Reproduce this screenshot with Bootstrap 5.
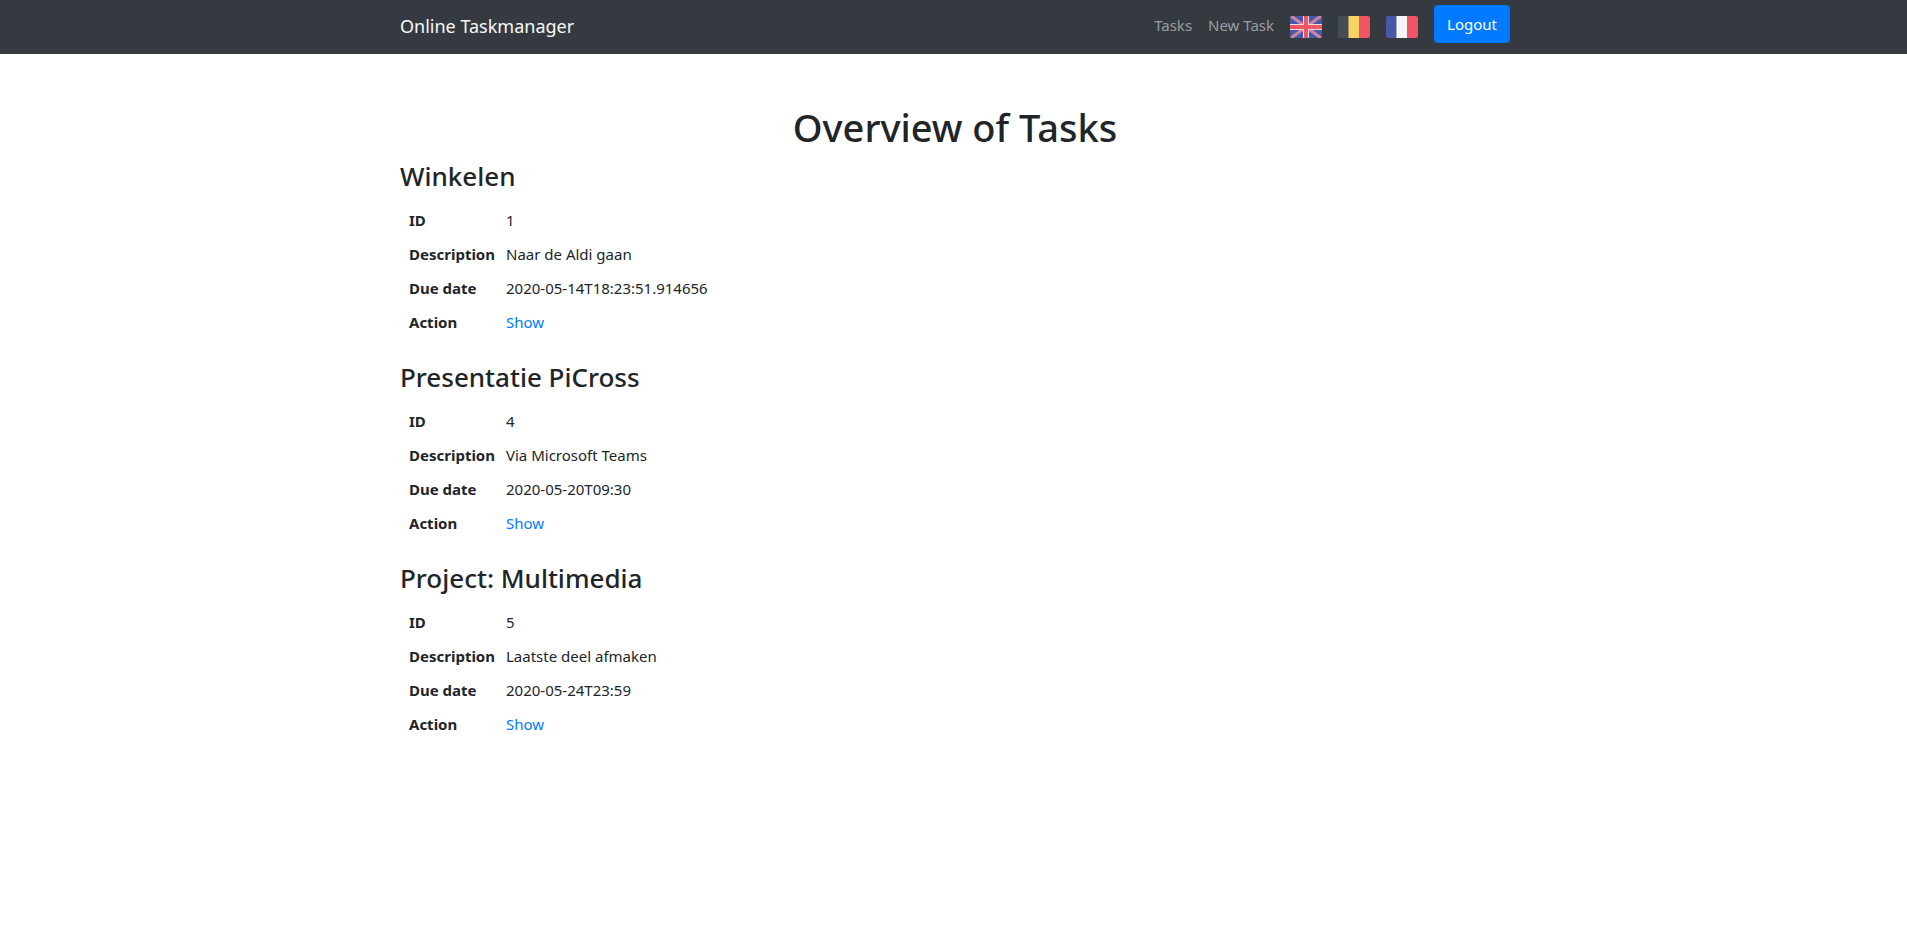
<!DOCTYPE html>
<html lang="en">
<head>
<meta charset="utf-8">
<meta name="viewport" content="width=device-width, initial-scale=1">
<title>Online Taskmanager</title>
<link href="https://cdn.jsdelivr.net/npm/bootstrap@5.3.0/dist/css/bootstrap.min.css" rel="stylesheet">
<style>
  body { font-family: "Segoe UI", "Noto Sans", "Open Sans", sans-serif; font-size: 15px; line-height: 24px; color: #212529; }
  .page-band { padding: 0 0 0 3px; }
  .page-band > .container { max-width: 1140px; padding: 0 15px; }
  .top-bar { background: #343a40; min-height: 54px; }
  .top-bar .navbar-brand { font-size: 18px; line-height: 30px; padding: 0 0 2px; }
  .top-bar .navbar-nav .nav-link { padding: 0 0 4px; color: rgba(255, 255, 255, .5); }
  .top-bar .navbar-nav .nav-link:hover { color: rgba(255, 255, 255, .75); }
  .top-bar .navbar-nav .flag-link { padding: 0 0 1px; }
  .flag { display: block; width: 32px; height: 22px; }
  .btn-logout { --bs-btn-bg: #007bff; --bs-btn-border-color: #007bff; --bs-btn-color: #fff; --bs-btn-hover-bg: #0069d9; --bs-btn-hover-color: #fff;
    font-size: 15px; line-height: 24px; padding: 6px 12px; border-radius: 4px; margin-bottom: 6px; }
  .page-title { font-size: 38px; line-height: 48px; margin: 49px 0 9px; }
  .task-title { font-size: 26px; line-height: 33px; margin: 0 0 10px; }
  .task-table { margin-bottom: 22px; }
  .task-table th, .task-table td { padding: 5px 0; }
  .task-table th { width: 106px; padding-left: 9px; font-weight: 700; }
  .task-table td { font-weight: 400; }
  .task-table a { color: #007bff; text-decoration: none; }
</style>
</head>
<body>
<nav class="navbar navbar-expand-md top-bar page-band" data-bs-theme="dark">
  <div class="container">
    <a class="navbar-brand" href="#">Online Taskmanager</a>
    <div class="navbar-nav flex-row align-items-center ms-auto gap-3">
      <a class="nav-link" href="#">Tasks</a>
      <a class="nav-link" href="#">New Task</a>
      <a class="nav-link flag-link" href="#" aria-label="English">
        <svg class="flag" viewBox="0 0 32 22">
          <clipPath id="uk"><rect width="32" height="22" rx="2"/></clipPath>
          <g clip-path="url(#uk)">
            <rect width="32" height="22" fill="#4758a9"/>
            <path d="M1 0L31 22M31 0L1 22" stroke="#a99cc4" stroke-width="3"/>
            <path d="M1 0L31 22M31 0L1 22" stroke="#e8788c" stroke-width="1.6"/>
            <path d="M16 0V22M0 11H32" stroke="#f0d5df" stroke-width="6"/>
            <path d="M16 0V22M0 11H32" stroke="#ef5565" stroke-width="4"/>
          </g>
        </svg>
      </a>
      <a class="nav-link flag-link" href="#" aria-label="Nederlands">
        <svg class="flag" viewBox="0 0 32 22">
          <clipPath id="be"><rect width="32" height="22" rx="2"/></clipPath>
          <g clip-path="url(#be)">
            <path d="M0 0H10V22H0z" fill="#464c55"/>
            <path d="M10 0H11V22H10z" fill="#a5925a"/>
            <path d="M11 0H21V22H11z" fill="#f6d660"/>
            <path d="M21 0H32V22H21z" fill="#ef5565"/>
          </g>
        </svg>
      </a>
      <a class="nav-link flag-link" href="#" aria-label="Français">
        <svg class="flag" viewBox="0 0 32 22">
          <clipPath id="fr"><rect width="32" height="22" rx="2"/></clipPath>
          <g clip-path="url(#fr)">
            <path d="M0 0H10V22H0z" fill="#4758a9"/>
            <path d="M10 0H11V22H10z" fill="#a9b0d4"/>
            <path d="M11 0H21V22H11z" fill="#f5f6fa"/>
            <path d="M21 0H32V22H21z" fill="#ef5565"/>
          </g>
        </svg>
      </a>
      <button type="button" class="btn btn-logout">Logout</button>
    </div>
  </div>
</nav>

<main class="page-band">
  <div class="container">
    <h1 class="page-title text-center">Overview of Tasks</h1>

    <h2 class="task-title">Winkelen</h2>
    <table class="task-table">
      <tr><th scope="row">ID</th><td>1</td></tr>
      <tr><th scope="row">Description</th><td>Naar de Aldi gaan</td></tr>
      <tr><th scope="row">Due date</th><td>2020-05-14T18:23:51.914656</td></tr>
      <tr><th scope="row">Action</th><td><a href="#">Show</a></td></tr>
    </table>

    <h2 class="task-title">Presentatie PiCross</h2>
    <table class="task-table">
      <tr><th scope="row">ID</th><td>4</td></tr>
      <tr><th scope="row">Description</th><td>Via Microsoft Teams</td></tr>
      <tr><th scope="row">Due date</th><td>2020-05-20T09:30</td></tr>
      <tr><th scope="row">Action</th><td><a href="#">Show</a></td></tr>
    </table>

    <h2 class="task-title">Project: Multimedia</h2>
    <table class="task-table">
      <tr><th scope="row">ID</th><td>5</td></tr>
      <tr><th scope="row">Description</th><td>Laatste deel afmaken</td></tr>
      <tr><th scope="row">Due date</th><td>2020-05-24T23:59</td></tr>
      <tr><th scope="row">Action</th><td><a href="#">Show</a></td></tr>
    </table>
  </div>
</main>
<script src="https://cdn.jsdelivr.net/npm/bootstrap@5.3.0/dist/js/bootstrap.bundle.min.js"></script>
</body>
</html>
